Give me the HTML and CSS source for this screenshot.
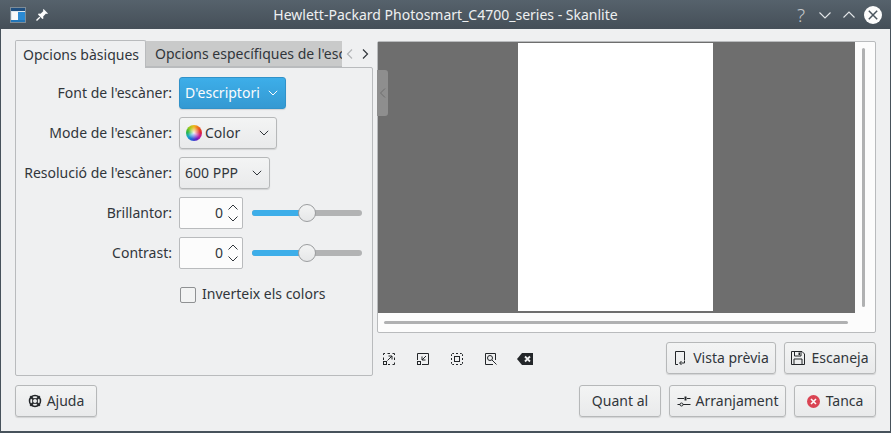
FILE: index.html
```html
<!DOCTYPE html>
<html lang="ca">
<head>
<meta charset="utf-8">
<title>Skanlite</title>
<link rel="stylesheet" href="styles.css">
</head>
<body>
<div class="window">
  <header class="titlebar">
    <div class="tb-left">
      <svg class="ico16" viewBox="0 0 16 16"><rect x="0" y="0" width="16" height="16" fill="#7d8c98"/><rect x="1" y="1" width="14" height="14" fill="#dce6ee"/><rect x="1" y="1" width="14" height="3" fill="#1f4f80"/><rect x="2" y="5" width="6" height="8" fill="#f6f8fa"/><rect x="8" y="5" width="7" height="8" fill="#2a8ad4"/><rect x="1" y="13" width="14" height="2" fill="#2376b8"/></svg>
      <svg class="ico14" viewBox="0 0 14 14"><path d="M8.600 1 13 5.400 11.900 6.100 11 5.600 8.200 8.400 8.400 10.400 7.400 11 3 6.600 3.600 5.600 5.600 5.800 8.400 3 7.900 2.100Z" fill="#fcfcfc"/><path d="M4.800 9.200 1.500 12.500" stroke="#fcfcfc" stroke-width="1.400"/></svg>
    </div>
    <div class="tb-title">Hewlett-Packard Photosmart_C4700_series - Skanlite</div>
    <div class="tb-right">
      <span class="tb-help">?</span>
      <svg class="tb-chev" viewBox="0 0 14 14"><path d="M1.500 4.500 7 10 12.500 4.500" fill="none" stroke="#e4e7e9" stroke-width="1.100"/></svg>
      <svg class="tb-chev" viewBox="0 0 14 14"><path d="M1.500 9.500 7 4 12.500 9.500" fill="none" stroke="#e4e7e9" stroke-width="1.100"/></svg>
      <svg class="tb-close" viewBox="0 0 18 18"><circle cx="9" cy="9" r="9" fill="#fcfcfc"/><path d="M4.800 4.800 13.200 13.200M13.200 4.800 4.800 13.200" stroke="#4a555e" stroke-width="1.500"/></svg>
    </div>
  </header>

  <main class="content">
    <div class="main-row">
      <section class="left">
        <div class="tabbar">
          <div class="tab tab-active">Opcions bàsiques</div>
          <div class="tab tab-rest"><span>Opcions específiques de l'escàner</span></div>
          <div class="tab-arrows">
            <svg class="ico10" viewBox="0 0 10 12"><path d="M7 1.500 2.500 6 7 10.500" fill="none" stroke="#b4b6b8" stroke-width="1.200"/></svg>
            <svg class="ico10" viewBox="0 0 10 12"><path d="M3 1.500 7.500 6 3 10.500" fill="none" stroke="#31363b" stroke-width="1.200"/></svg>
          </div>
        </div>
        <div class="pane">
          <div class="form">
            <label class="lbl">Font de l'escàner:</label>
            <div class="combo combo-active w107"><span>D'escriptori</span><svg class="chev" viewBox="0 0 10 6"><path d="M.8.8 5 5 9.200.8" fill="none" stroke="#fcfcfc" stroke-width="1"/></svg></div>

            <label class="lbl">Mode de l'escàner:</label>
            <div class="combo w98"><span class="with-ico"><span class="wheel"></span>Color</span><svg class="chev" viewBox="0 0 10 6"><path d="M.8.8 5 5 9.200.8" fill="none" stroke="#31363b" stroke-width="1"/></svg></div>

            <label class="lbl">Resolució de l'escàner:</label>
            <div class="combo w91"><span>600 PPP</span><svg class="chev" viewBox="0 0 10 6"><path d="M.8.8 5 5 9.200.8" fill="none" stroke="#31363b" stroke-width="1"/></svg></div>

            <label class="lbl">Brillantor:</label>
            <div class="spin-row">
              <div class="spin"><span>0</span><svg class="spin-ico" viewBox="0 0 12 20"><path d="M1.500 6.500 6 2 10.500 6.500M1.500 13.500 6 18 10.500 13.500" fill="none" stroke="#31363b" stroke-width="1"/></svg></div>
              <div class="slider"><div class="fill"></div><div class="thumb"></div></div>
            </div>

            <label class="lbl">Contrast:</label>
            <div class="spin-row">
              <div class="spin"><span>0</span><svg class="spin-ico" viewBox="0 0 12 20"><path d="M1.500 6.500 6 2 10.500 6.500M1.500 13.500 6 18 10.500 13.500" fill="none" stroke="#31363b" stroke-width="1"/></svg></div>
              <div class="slider"><div class="fill"></div><div class="thumb"></div></div>
            </div>

            <span></span>
            <div class="check-row"><span class="checkbox"></span>Inverteix els colors</div>
          </div>
        </div>
      </section>

      <section class="right">
        <div class="preview">
          <div class="handle"><svg class="ico-handle" viewBox="0 0 8 12"><path d="M6 1.500 1.500 6 6 10.500" fill="none" stroke="#6e6e6e" stroke-width="1"/></svg></div>
          <div class="preview-top">
            <div class="canvas"><div class="page"></div></div>
            <div class="vtrack"><div class="vthumb"></div></div>
          </div>
          <div class="htrack"><div class="hthumb"></div></div>
        </div>
        <div class="toolrow">
          <div class="tools">
            <svg class="ico12" viewBox="0 0 12 12"><g fill="none" stroke="#232629"><path d="M.5 2V.5H2M4.500 .5H7M9.500 .5H11.500V2M11.500 4.500V7M11.500 9.500V11.500H9.500M5 11.500H7M.5 4.500V7"/><rect x=".5" y="8.500" width="3" height="3"/><path d="M4.500 7.500 9 3M5.500 3H9V6.500"/></g></svg>
            <svg class="ico12" viewBox="0 0 12 12"><g fill="none" stroke="#232629"><path d="M.5 7V.5H11.500V11.500H5"/><rect x=".5" y="8.500" width="3" height="3"/><path d="M9 3 5 7M5 3.500V7H8.500"/></g></svg>
            <svg class="ico12" viewBox="0 0 12 12"><g fill="none" stroke="#232629"><rect x="3.500" y="3.500" width="5" height="5"/><path d="M.5 3V1.500L1.500 .5H3M5 .5H7M9 .5H10.500L11.500 1.500V3M.5 5V7M11.500 5V7M.5 9V10.500L1.500 11.500H3M5 11.500H7M9 11.500H10.500L11.500 10.500V9"/></g></svg>
            <svg class="ico12" viewBox="0 0 12 12"><g fill="none" stroke="#232629"><path d="M8 11.500H.5V.5H10.500V7"/><circle cx="5" cy="5" r="2.500"/><path d="M7 7 11.500 11.500"/></g></svg>
            <svg class="ico-del" viewBox="0 0 16 12"><path d="M5 0H16V12H5L0 6Z" fill="#232629"/><path d="M8 3.500 13 8.500M13 3.500 8 8.500" stroke="#eff0f1" stroke-width="1.800"/></svg>
          </div>
          <div class="actions">
            <button class="btn btn-wide w110"><svg class="ico14" viewBox="0 0 14 14"><path d="M5 13.500H2.500V.5H11.500V9" fill="none" stroke="#232629"/><path d="M11.500 9.500V12H7M8.500 10 6.500 12 8.500 14" fill="none" stroke="#232629"/></svg>Vista prèvia</button>
            <button class="btn btn-wide w92"><svg class="ico14" viewBox="0 0 14 14"><path d="M.5.5H11L13.500 3V13.500H.5Z" fill="none" stroke="#232629"/><path d="M3.500 1V5H10V1M3 13V8H11V13" fill="none" stroke="#232629"/><rect x="7.500" y="1.500" width="1.500" height="2.500" fill="#232629"/></svg>Escaneja</button>
          </div>
        </div>
      </section>
    </div>

    <footer class="footer">
      <button class="btn w82"><svg class="ico14" viewBox="0 0 14 14"><circle cx="7" cy="7" r="5.500" fill="none" stroke="#232629" stroke-width="1.500"/><circle cx="7" cy="7" r="2.500" fill="none" stroke="#232629"/><path d="M3 1.500 1.500 3 4.500 6 6 4.500ZM11 1.500 12.500 3 9.500 6 8 4.500ZM3 12.500 1.500 11 4.500 8 6 9.500ZM11 12.500 12.500 11 9.500 8 8 9.500Z" fill="#232629"/></svg>Ajuda</button>
      <div class="footer-right">
        <button class="btn w82">Quant al</button>
        <button class="btn w117"><svg class="ico14" viewBox="0 0 14 14"><path d="M.5 4.500H7M10 4.500H13.500M.5 10.500H3M6 10.500H13.500" fill="none" stroke="#232629"/><rect x="7.500" y="2.500" width="2" height="4" fill="#232629"/><circle cx="4.500" cy="10.500" r="1.500" fill="none" stroke="#232629"/></svg>Arranjament</button>
        <button class="btn btn-wide w82"><svg class="ico13" viewBox="0 0 13 13"><circle cx="6.500" cy="6.500" r="6.500" fill="#da4453"/><path d="M4 4 9 9M9 4 4 9" stroke="#fcfcfc" stroke-width="1.600"/></svg>Tanca</button>
      </div>
    </footer>
  </main>
</div>
</body>
</html>
```

FILE: styles.css
```css
* { box-sizing: border-box; }
html, body { margin: 0; padding: 0; }
body {
  width: 891px;
  height: 433px;
  overflow: hidden;
  font-family: "Noto Sans", sans-serif;
  font-size: 14px;
  color: #31363b;
}
svg { display: block; flex: none; }
.ico16 { width: 16px; height: 16px; }
.ico14 { width: 14px; height: 14px; }
.ico13 { width: 13px; height: 13px; }
.ico12 { width: 12px; height: 12px; }
.ico10 { width: 10px; height: 12px; }
.ico-del { width: 16px; height: 12px; margin-left: -2px; }

.window {
  width: 891px;
  height: 433px;
  display: flex;
  flex-direction: column;
  background: #eff0f1;
  border: 1px solid #47525b;
  border-top: 0;
  border-bottom-width: 2px;
}
.titlebar {
  height: 29px;
  flex: none;
  display: flex;
  align-items: center;
  justify-content: space-between;
  padding: 0 9px 0 10px;
  margin: 0 -1px;
  background: linear-gradient(#56626c, #454f58);
  color: #fcfcfc;
  position: relative;
}
.tb-left { display: flex; align-items: center; gap: 9px; }
.tb-title {
  position: absolute;
  left: 0;
  right: 0;
  top: 0;
  line-height: 29px;
  text-align: center;
  color: #eef0f1;
}
.tb-right { display: flex; align-items: center; gap: 10px; position: relative; }
.tb-help { font-size: 19px; font-weight: 300; line-height: 20px; color: #c4c8cc; width: 14px; text-align: center; }
.tb-chev { width: 14px; height: 14px; }
.tb-close { width: 18px; height: 18px; margin-left: -2px; }

.content {
  flex: 1;
  display: flex;
  flex-direction: column;
  padding: 11px 14px 14px 14px;
  min-height: 0;
}
.main-row { display: flex; gap: 4px; flex: none; height: 336px; }

.left { width: 358px; display: flex; flex-direction: column; flex: none; }
.tabbar { display: flex; height: 27px; flex: none; position: relative; z-index: 1; }
.tab { display: flex; align-items: center; white-space: nowrap; overflow: hidden; }
.tab-active {
  width: 131px;
  height: 28px;
  padding-left: 7px;
  background: #eff0f1;
  border: 1px solid #b9bbbd;
  border-bottom: 0;
  border-radius: 2px 2px 0 0;
}
.tab-rest {
  width: 196px;
  margin-top: 1px;
  padding-left: 9px;
  background: #c9caca;
  border-bottom: 1px solid #b9bbbd;
}
.tab-arrows { display: flex; align-items: center; gap: 5px; padding-left: 3px; }
.pane {
  flex: 1;
  border: 1px solid #b9bbbd;
  border-radius: 0 2px 2px 2px;
  padding: 9px 0 0 8px;
}
.form {
  display: grid;
  grid-template-columns: 148px auto;
  justify-content: start;
  column-gap: 7px;
  row-gap: 8px;
  grid-auto-rows: 32px;
}
.lbl { display: flex; align-items: center; justify-content: flex-end; white-space: nowrap; padding-bottom: 2px; }
.combo {
  display: flex;
  align-items: center;
  justify-content: space-between;
  padding: 0 7px 2px 5px;
  border: 1px solid #b6b8b9;
  border-radius: 3px;
  background: linear-gradient(#f3f4f4, #e9eaeb);
  box-shadow: 0 1px 1px rgba(0,0,0,.12);
}
.combo-active {
  background: linear-gradient(#3daee9, #3499d2);
  border-color: #3192c9;
  color: #fcfcfc;
}
.chev { width: 10px; height: 6px; margin-top: 2px; }
.w107 { width: 107px; }
.w98 { width: 98px; }
.w91 { width: 91px; }
.with-ico { display: flex; align-items: center; gap: 3px; }
.wheel {
  width: 16px;
  height: 16px;
  flex: none;
  margin: 2px 0 0 1px;
  border-radius: 50%;
  background:
    radial-gradient(circle, rgba(255,255,255,.9) 0, rgba(255,255,255,0) 55%),
    conic-gradient(#f0b81e, #ee6a1e, #e0282e, #c01c9c, #6025c4, #1f5fd8, #18a8c8, #2fb83e, #a0c81c, #f0b81e);
}

.spin-row { display: flex; align-items: center; gap: 9px; }
.spin {
  width: 64px;
  height: 32px;
  display: flex;
  align-items: center;
  justify-content: flex-end;
  gap: 4px;
  padding: 0 3px 2px 0;
  background: #fcfcfc;
  border: 1px solid #b9bbbd;
  border-radius: 2px;
}
.spin-ico { width: 12px; height: 20px; margin-top: 2px; }
.slider {
  width: 110px;
  height: 6px;
  border-radius: 3px;
  background: #b2b3b4;
  position: relative;
}
.fill {
  width: 55px;
  height: 6px;
  border-radius: 3px 0 0 3px;
  background: #3daee9;
}
.thumb {
  position: absolute;
  left: 46px;
  top: -6px;
  width: 18px;
  height: 18px;
  border-radius: 50%;
  background: linear-gradient(#f3f4f4, #e6e7e8);
  border: 1px solid #9b9d9f;
}
.check-row { display: flex; align-items: center; gap: 6px; padding-left: 1px; margin-top: 1px; }
.checkbox {
  width: 16px;
  height: 16px;
  margin-top: 2px;
  border: 1px solid #8f9193;
  border-radius: 2px;
  background: #f2f3f3;
}

.right { flex: 1; display: flex; flex-direction: column; min-width: 0; padding-top: 1px; }
.preview {
  height: 292px;
  flex: none;
  background: #fcfcfc;
  border: 1px solid #b9bbbd;
  border-radius: 2px;
  position: relative;
  display: flex;
  flex-direction: column;
}
.handle {
  position: absolute;
  left: -1px;
  top: 28px;
  width: 11px;
  height: 46px;
  background: #8e8e8e;
  border-radius: 0 3px 3px 0;
  display: flex;
  align-items: center;
  justify-content: center;
}
.ico-handle { width: 8px; height: 12px; }
.preview-top { display: flex; height: 271px; flex: none; }
.canvas {
  width: 477px;
  background: #6e6e6e;
  padding-top: 1px;
  padding-left: 140px;
  flex: none;
}
.page { width: 195px; height: 268px; background: #fff; }
.vtrack { flex: 1; padding: 6px 0 6px 7px; }
.vthumb { width: 3px; height: 100%; background: #b0b1b2; border-radius: 2px; }
.htrack { padding: 8px 0 0 6px; }
.hthumb { width: 464px; height: 3px; background: #b0b1b2; border-radius: 2px; }

.toolrow { display: flex; justify-content: space-between; padding-top: 9px; }
.tools { display: flex; gap: 22px; align-items: center; padding: 1px 0 0 6px; height: 32px; }
.actions { display: flex; gap: 8px; }

.btn {
  height: 32px;
  display: flex;
  align-items: center;
  justify-content: center;
  gap: 5px;
  padding: 0 0 2px;
  font: inherit;
  color: #31363b;
  border: 1px solid #b6b8b9;
  border-radius: 3px;
  background: linear-gradient(#f3f4f4, #e9eaeb);
  box-shadow: 0 1px 1px rgba(0,0,0,.12);
}
.btn svg { margin-top: 2px; }
.btn-wide { gap: 6px; }
.w82 { width: 82px; }
.w92 { width: 92px; }
.w110 { width: 110px; }
.w117 { width: 117px; }

.footer { display: flex; justify-content: space-between; margin-top: 9px; }
.footer-right { display: flex; gap: 8px; }
```
